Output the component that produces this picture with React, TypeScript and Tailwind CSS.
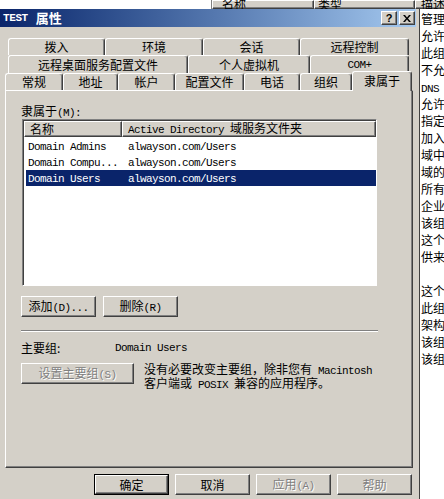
import React from "react";

const raised =
  "border border-t-white border-l-white border-r-[#404040] border-b-[#404040] shadow-[inset_-1px_-1px_0_#808080]";
const sunken =
  "border border-t-[#808080] border-l-[#808080] border-r-white border-b-white shadow-[inset_1px_1px_0_#404040]";
const mono = "font-['Liberation_Mono',monospace] text-[11px] tracking-[-0.6px]";
const grayText = "text-[#808080] [text-shadow:1px_1px_0_#ffffff]";

function M({ children }: { children: React.ReactNode }) {
  return <span className={mono}>{children}</span>;
}

function Tab({ label, w }: { label: React.ReactNode; w: string }) {
  return (
    <div
      className={`flex h-full shrink-0 items-center justify-center rounded-t-[3px] border-t border-l border-r border-t-white border-l-white border-r-[#404040] shadow-[inset_-1px_0_0_#808080] ${w}`}
    >
      {label}
    </div>
  );
}

function Btn({
  label,
  w = "w-[75px]",
  disabled,
  isDefault,
}: {
  label: React.ReactNode;
  w?: string;
  disabled?: boolean;
  isDefault?: boolean;
}) {
  const inner = (
    <div className={`flex h-full w-full items-center justify-center ${raised} ${disabled ? grayText : ""}`}>
      <span className="whitespace-pre">{label}</span>
    </div>
  );
  if (isDefault) {
    return <div className={`h-[21px] shrink-0 border border-black ${w}`}>{inner}</div>;
  }
  return <div className={`h-[21px] shrink-0 ${w}`}>{inner}</div>;
}

const descriptions: React.ReactNode[] = [
  "管理计算机(域)的内置帐户",
  "允许将此组中成员的密码复制到域中的所有只读域控制器",
  "此组的成员被允许发布证书到目录",
  "不允许将此组中成员的密码复制到域中的所有只读域控制器",
  <M key="dns">DNS Administrators</M>,
  "允许替其他客户端执行动态更新的 DNS 客户端",
  "指定的域管理员",
  "加入到域中的所有工作站和服务器",
  "域中所有域控制器",
  "域的所有来宾",
  "所有域用户",
  "企业的指定系统管理员",
  "该组的成员是企业中的只读域控制器",
  "这个组中的成员可以修改域的组策略",
  "供来宾访问计算机或访问域的内置帐户",
  "",
  "这个组中的服务器可以访问用户的远程访问属性",
  "此组的成员是域中只读域控制器",
  "架构的指定系统管理员",
  "该组中的成员被授予本地安全策略",
  "该组中的成员无法复制密码",
];

const members = [
  { name: "Domain Admins", folder: "alwayson.com/Users" },
  { name: "Domain Compu...", folder: "alwayson.com/Users" },
  { name: "Domain Users", folder: "alwayson.com/Users", selected: true },
];

export default function App() {
  return (
    <div className="flex h-[499px] w-[444px] flex-col overflow-hidden bg-white font-['Noto_Sans_CJK_SC',sans-serif] text-[12px] leading-[14px] text-black">
      {/* background window column header */}
      <div className="flex h-[9px] shrink-0 overflow-hidden">
        <div className="w-[212px] shrink-0 border-r border-r-[#808080] bg-white" />
        <div className={`flex h-full w-[102px] shrink-0 items-end bg-[#d4d0c8] pl-[9px] ${raised}`}>
          <span className="-mb-[3px] leading-[14px]">名称</span>
        </div>
        <div className={`flex h-full w-[101px] shrink-0 items-end bg-[#d4d0c8] pl-[3px] ${raised}`}>
          <span className="-mb-[3px] leading-[14px]">类型</span>
        </div>
        <div className={`flex h-full flex-1 items-end bg-[#d4d0c8] pl-[5px] ${raised}`}>
          <span className="-mb-[3px] whitespace-nowrap leading-[14px]">描述</span>
        </div>
      </div>

      <div className="flex flex-1">
        {/* properties dialog */}
        <div className="flex w-[420px] shrink-0 flex-col border-r border-r-[#404040] bg-[#d4d0c8]">
          <div className="flex h-[18px] w-[416px] items-center bg-linear-to-r from-[#0a246a] to-[#a6caf0] pl-[3px] pr-[1px] text-white">
            <span className="font-['Liberation_Mono',monospace] text-[11px] font-bold tracking-[-0.4px]">TEST</span>
            <span className="ml-[8px] text-[13px] font-bold">属性</span>
            <div className="ml-auto flex gap-[2px]">
              <div className={`flex h-[14px] w-[16px] items-center justify-center bg-[#d4d0c8] font-['Liberation_Sans',sans-serif] text-[11px] font-bold text-black ${raised}`}>
                ?
              </div>
              <div className={`flex h-[14px] w-[16px] items-center justify-center bg-[#d4d0c8] text-black ${raised}`}>
                <svg width="8" height="7" viewBox="0 0 8 7">
                  <path d="M0 0h2l2 2.5L6 0h2L5 3.5 8 7H6L4 4.5 2 7H0l3-3.5z" fill="#000" />
                </svg>
              </div>
            </div>
          </div>

          {/* tab rows */}
          <div className="mt-[11px] flex h-[17px] pl-[8px]">
            <Tab label="拨入" w="w-[97px]" />
            <Tab label="环境" w="w-[98px]" />
            <Tab label="会话" w="w-[97px]" />
            <Tab label="远程控制" w="w-[109px]" />
          </div>
          <div className="flex h-[18px] pl-[8px]">
            <Tab label="远程桌面服务配置文件" w="w-[180px]" />
            <Tab label="个人虚拟机" w="w-[122px]" />
            <Tab label={<M>COM+</M>} w="w-[99px]" />
          </div>
          <div className="flex h-[17px] items-end pl-[5px]">
            <Tab label="常规" w="w-[58px]" />
            <Tab label="地址" w="w-[55px]" />
            <Tab label="帐户" w="w-[57px]" />
            <Tab label="配置文件" w="w-[69px]" />
            <Tab label="电话" w="w-[56px]" />
            <Tab label="组织" w="w-[52px]" />
            <div className="relative top-[1px] z-10 flex h-[20px] w-[60px] shrink-0 items-center justify-center rounded-t-[3px] border-t border-l border-r border-t-white border-l-white border-r-[#404040] bg-[#d4d0c8] pb-[2px] shadow-[inset_-1px_0_0_#808080]">
              隶属于
            </div>
          </div>

          {/* tab panel */}
          <div className={`ml-[5px] flex h-[378px] w-[408px] flex-col pl-[15px] ${raised}`}>
            <div className="mt-[13px] h-[14px]">
              隶属于<M>(M):</M>
            </div>
            <div className={`ml-[1px] mt-[1px] flex h-[167px] w-[355px] flex-col bg-white ${sunken}`}>
              <div className="ml-[1px] mt-[1px] flex h-[16px]">
                <div className={`flex w-[98px] items-center bg-[#d4d0c8] pl-[5px] ${raised}`}>名称</div>
                <div className={`flex flex-1 items-center bg-[#d4d0c8] pl-[5px] ${raised}`}>
                  <span className="whitespace-pre">
                    <M>Active Directory </M>域服务文件夹
                  </span>
                </div>
              </div>
              <div className="flex flex-col pl-[3px] pt-[1px]">
                {members.map((m) => (
                  <div
                    key={m.name}
                    className={`flex h-[16px] items-center ${m.selected ? "bg-[#0a246a] text-white" : ""}`}
                  >
                    <div className="w-[96px] whitespace-nowrap pl-[2px]">
                      <M>{m.name}</M>
                    </div>
                    <div className="whitespace-nowrap pl-[6px]">
                      <M>{m.folder}</M>
                    </div>
                  </div>
                ))}
              </div>
            </div>

            <div className="mt-[10px] flex gap-[7px]">
              <Btn label={<>添加<M>(D)...</M></>} />
              <Btn label={<>删除<M>(R)</M></>} />
            </div>

            <div className="mt-[13px] h-[2px] w-[357px] border-t border-b border-t-[#808080] border-b-white" />

            <div className="mt-[9px] flex h-[14px] items-center">
              <div className="w-[94px]">主要组:</div>
              <M>Domain Users</M>
            </div>

            <div className="mt-[8px] flex items-start gap-[10px]">
              <Btn label={<>设置主要组<M>(S)</M></>} w="w-[113px]" disabled />
              <div className="leading-[12px]">
                <div className="whitespace-pre">
                  没有必要改变主要组，除非您有<M> Macintosh</M>
                </div>
                <div className="whitespace-pre">
                  客户端或<M> POSIX </M>兼容的应用程序。
                </div>
              </div>
            </div>
          </div>

          {/* dialog buttons */}
          <div className="mt-[6px] flex gap-[6px] pl-[94px]">
            <Btn label="确定" isDefault />
            <Btn label="取消" />
            <Btn label={<>应用<M>(A)</M></>} disabled />
            <Btn label="帮助" disabled />
          </div>
        </div>

        {/* background list description column */}
        <div className="flex flex-1 flex-col overflow-hidden pl-[1px] pt-[1px]">
          {descriptions.map((d, i) => (
            <div key={i} className="h-[17px] whitespace-nowrap leading-[17px]">
              {d}
            </div>
          ))}
        </div>
      </div>
    </div>
  );
}
